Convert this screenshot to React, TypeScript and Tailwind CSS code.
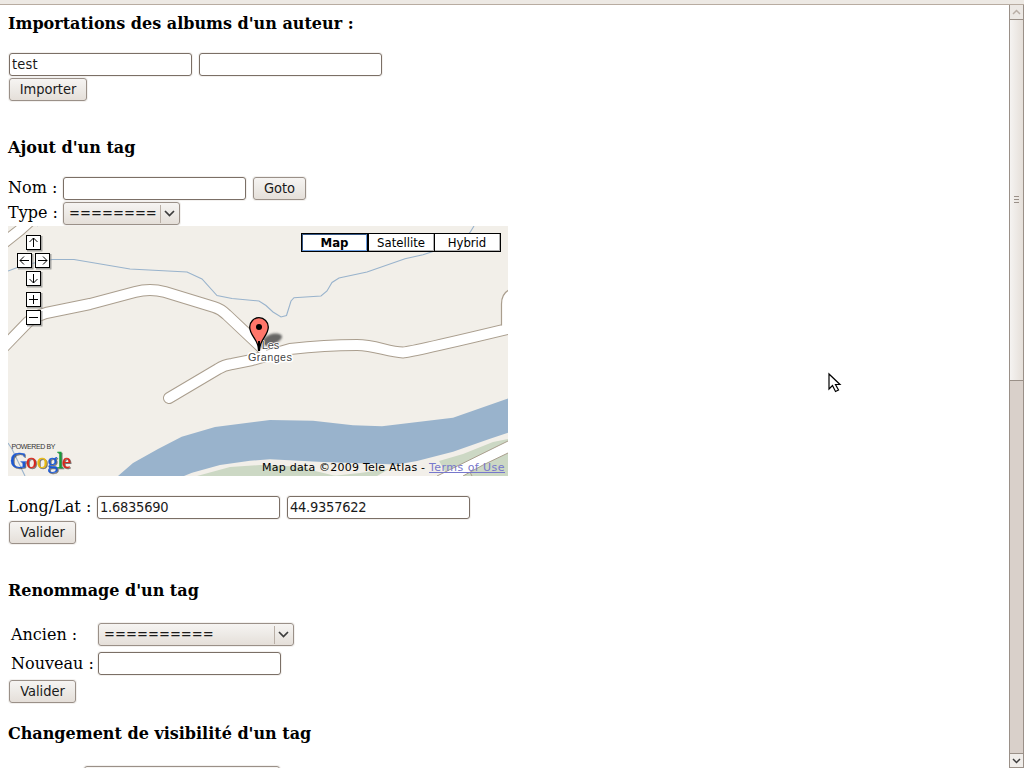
import type { ReactNode } from 'react';

const shadow = 'shadow-[0_0_0_1px_#f3f1ef]';

function Field({ value = '', numeric = false }: { value?: string; numeric?: boolean }) {
  return (
    <input
      defaultValue={value}
      className={`block h-[23px] w-[183px] shrink-0 rounded-[3px] border border-[#7b6f66] bg-white px-[2px] pb-[1px] font-['DejaVu_Sans_Condensed','DejaVu_Sans',sans-serif] text-[14.5px] text-[#1a1a1a] outline-none ${numeric ? 'tracking-[-0.25px]' : 'tracking-[0.15px]'} ${shadow}`}
    />
  );
}

function Button({ children, width }: { children: ReactNode; width: string }) {
  return (
    <button
      className={`flex h-[23px] shrink-0 items-center justify-center rounded-[3px] border border-[#9a9088] bg-linear-to-b from-[#f6f4f2] via-[#edeae6] to-[#e5dfd9] pb-[1px] font-['DejaVu_Sans_Condensed','DejaVu_Sans',sans-serif] text-[14.5px] text-[#1a1a1a] ${shadow} ${width}`}
    >
      {children}
    </button>
  );
}

function Select({ children, width }: { children?: ReactNode; width: string }) {
  return (
    <div
      className={`flex h-[23px] shrink-0 items-center rounded-[3px] border border-[#9a9088] bg-linear-to-b from-[#f6f4f2] via-[#edeae6] to-[#e5dfd9] pl-[5px] font-['DejaVu_Sans_Condensed','DejaVu_Sans',sans-serif] text-[14.5px] text-[#1a1a1a] ${shadow} ${width}`}
    >
      <span className="flex-1 pb-[1px] tracking-[0.05px] whitespace-nowrap">{children}</span>
      <span className="h-[18px] w-px bg-[#b9afa6]" />
      <svg width="18" height="21" viewBox="0 0 18 21" fill="none" stroke="#3c3c3c" strokeWidth="1.700">
        <path d="M4 8L8.500 12.500L13 8" />
      </svg>
    </div>
  );
}

function Heading({ children, className }: { children: ReactNode; className: string }) {
  return <h3 className={`h-[22px] shrink-0 pt-px text-[16px] leading-[22px] font-bold whitespace-nowrap ${className}`}>{children}</h3>;
}

const controls = [
  { x: 26, y: 235, d: 'M7.500 12V3M3.500 7L7.500 3L11.500 7' },
  { x: 17, y: 253, d: 'M12 7.500H3M7 3.500L3 7.500L7 11.500' },
  { x: 35, y: 253, d: 'M3 7.500H12M8 3.500L12 7.500L8 11.500' },
  { x: 26, y: 271, d: 'M7.500 3V12M3.500 8L7.500 12L11.500 8' },
  { x: 26, y: 292, d: 'M7.500 3V12M3 7.500H12' },
  { x: 26, y: 310, d: 'M3 7.500H12' },
];

const roads = [
  'M0 351L28 322Q36 316 46 313L90 304L135 292Q150 288 165 292L214 307Q221 309 227 315L262 348',
  'M169 398L218 369Q224 365 232 364L252 360L290 349Q325 345 357 345C375 345 388 352 403 352.500Q412 352 520 326',
  'M-4 249L20 230L40 212',
];

const logo: [string, string, number, number][] = [
  ['G', '#1b58d3', 10, 24],
  ['o', '#d8261c', 26, 21.5],
  ['o', '#e8b910', 36.8, 21.5],
  ['g', '#1b58d3', 47.3, 21.5],
  ['l', '#159c3a', 57, 24],
  ['e', '#d8261c', 62, 20],
];

function MapDrawing() {
  return (
    <svg className="block" width="500" height="250" viewBox="8 226 500 250">
      <defs>
        <filter id="soft" x="-20%" y="-50%" width="140%" height="200%">
          <feGaussianBlur stdDeviation="0.8" />
        </filter>
      </defs>
      <rect x="8" y="226" width="500" height="250" fill="#f2efe9" />
      <g fill="#ccd8c4">
        <path d="M197 476L230 467L260 465L303 466.700L315 471L336 476Z" />
        <path d="M332 476L360 473L389 469L377 476Z" />
        <path d="M439 461L463 454L493 442L508 439V476H448Z" />
      </g>
      <path
        d="M118 476L133 463L158 449L181.700 436.700L215 427L262 421L270 420L313 420.700L353 425.300L382 426.300L453 417.700L508 398.500V432.700L490 438.700L453 451.700L417 461L397 464.500L323 462L270 459.300L250 460.700L220 465L192 472.700L184 476Z"
        fill="#99b3cc"
      />
      <path d="M508 441L437 476H463L483 465L508 453Z" fill="#fff" />
      <path d="M508 441L437 476M508 453L483 465L463 476M470 472L472 476" fill="none" stroke="#a99e8d" />
      <g fill="none" stroke="#99b3cc" strokeWidth="1.100">
        <path d="M8 271L24 265L52 259.500H74L130 269L187 272L202 279L217 295.500L232 298.500L259 301L266 305.500L273 312L281 317L286.500 315.500L291 301L294 297.700L321 296L327 291L332 282.500L339 278L367 272L405 258.700L423 254.700L433 251.500L460 243L470 232.500L474 226" />
        <path d="M8 443L12 449L25 476M37 226L48 218" />
      </g>
      <g fill="none" strokeLinecap="round" strokeLinejoin="round">
        {roads.map((d) => <path key={d} d={d} stroke="#aa9e8e" strokeWidth="12" />)}
        {roads.map((d) => <path key={d} d={d} stroke="#fff" strokeWidth="10" />)}
      </g>
      <path d="M510 290Q501.500 294 501.500 304V329H510Z" fill="#fff" />
      <path d="M510 289.500Q501.500 293 501.500 304V325.500" fill="none" stroke="#aa9e8e" strokeWidth="1.200" />
      <path d="M260 348C262 343 262 338 269 335C275 332.500 282 333.500 282 337C281 342 272 345 267 345Q263 346 260 349Z" fill="#444" opacity="0.8" filter="url(#soft)" />
      <g fontFamily="'Liberation Sans', Arial, sans-serif" fontSize="11" fill="#444" stroke="#fff" strokeWidth="3" strokeLinejoin="round" paintOrder="stroke" textAnchor="middle">
        <text x="270.500" y="349" strokeWidth="1.500">Les</text>
        <text x="270" y="361" textLength="44">Granges</text>
      </g>
      <path d="M258.500 350C258.500 339 249.700 336 249.700 327A9.300 9.300 0 0 1 268.300 327C268.300 336 259.500 339 259.500 350Z" fill="#ff766a" stroke="#000" strokeWidth="1.300" />
      <path d="M259 341V351" stroke="#000" strokeWidth="2" />
      <circle cx="259" cy="327" r="3" />
      {controls.map((c) => (
        <g key={`${c.x}-${c.y}`} transform={`translate(${c.x} ${c.y})`}>
          <rect x="1" y="1" width="15.500" height="15.500" fill="#777" opacity="0.6" />
          <rect x="0.500" y="0.500" width="14" height="14" fill="#fff" stroke="#000" />
          <path d={c.d} fill="none" stroke="#000" />
        </g>
      ))}
      <text x="11.500" y="449" fontFamily="'Liberation Sans', sans-serif" fontSize="7" fill="#333" textLength="44">POWERED BY</text>
      <g fontFamily="'Liberation Serif', serif" strokeWidth="0.3">
        <text y="468" className="[filter:drop-shadow(1px_1px_0.5px_rgba(0,0,0,0.5))]">
          {logo.map(([ch, color, x, size]) => (
            <tspan key={x} x={x} fontSize={size} fill={color} stroke={color}>{ch}</tspan>
          ))}
        </text>
      </g>
    </svg>
  );
}

function MapView() {
  return (
    <div className="relative h-[250px] w-[500px] shrink-0 overflow-hidden font-['DejaVu_Sans_Condensed','DejaVu_Sans',sans-serif]">
      <MapDrawing />
      <div className="absolute top-[7px] right-[7px] flex h-[19px] w-[200px] border border-black bg-black text-[13px] leading-[17px] text-black">
        <div className="w-[65px] border border-[#345684] border-r-[#6c9ddf] border-b-[#6c9ddf] bg-white text-center leading-[16px] font-bold">Map</div>
        <div className="ml-[2px] w-[65px] border-r border-b border-[#b0b0b0] bg-white text-center">Satellite</div>
        <div className="ml-px w-[64px] flex-1 border-r border-b border-[#b0b0b0] bg-white text-center">Hybrid</div>
      </div>
      <div className="absolute right-[3px] bottom-[1px] font-['DejaVu_Sans',sans-serif] text-[11px] leading-[15px] tracking-[0.23px] whitespace-nowrap text-black">
        Map data ©2009 Tele Atlas - <a className="tracking-[0.45px] text-[#7777cc] underline">Terms of Use</a>
      </div>
    </div>
  );
}

function Scrollbar() {
  return (
    <div className="flex w-[15px] shrink-0 flex-col border-x border-[#9a9088] bg-[#d9d0ca]">
      <div className="flex h-[15px] shrink-0 items-center justify-center border-b border-[#9a9088] bg-[#ece8e4]">
        <svg width="9" height="6" fill="none" stroke="#b9aea6" strokeWidth="1.500"><path d="M1 5L4.500 1.500L8 5" /></svg>
      </div>
      <div className="flex h-[361px] shrink-0 flex-col items-center justify-center gap-[2px] border-b border-[#9a9088] bg-linear-to-r from-[#f5f3f1] to-[#e5dfd9] pb-[2px]">
        <span className="h-px w-[5px] bg-[#9a9088]" />
        <span className="h-px w-[5px] bg-[#9a9088]" />
        <span className="h-px w-[5px] bg-[#9a9088]" />
      </div>
      <div className="flex-1" />
      <div className="flex h-[15px] shrink-0 items-center justify-center border-y border-[#9a9088] bg-[#f0edea]">
        <svg width="9" height="6" fill="none" stroke="#3c3c3c" strokeWidth="1.500"><path d="M1 1L4.500 4.500L8 1" /></svg>
      </div>
    </div>
  );
}

export default function App() {
  return (
    <div className="relative flex h-[768px] w-[1024px] flex-col overflow-hidden bg-white font-['DejaVu_Serif',serif] text-[16px] leading-[22px] text-black">
      <div className="h-[5px] shrink-0 border-b border-[#b8aca1] bg-[#ede9e4]" />
      <div className="flex min-h-0 flex-1">
        <main className="flex min-w-0 flex-1 flex-col overflow-hidden pt-[7px] pl-[8px]">
          <Heading className="">Importations des albums d'un auteur :</Heading>
          <div className="mt-[19px] ml-px flex gap-[7px]">
            <Field value="test" />
            <Field />
          </div>
          <div className="mt-[2px] ml-px flex"><Button width="w-[78px]">Importer</Button></div>

          <Heading className="mt-[35px]">Ajout d'un tag</Heading>
          <div className="mt-[19px] flex">
            <label className="w-[55px] shrink-0 whitespace-nowrap">Nom :</label>
            <Field />
            <div className="ml-[7px]"><Button width="w-[53px]">Goto</Button></div>
          </div>
          <div className="mt-[2px] flex">
            <label className="w-[55px] shrink-0 whitespace-nowrap">Type :</label>
            <Select width="w-[117px]">========</Select>
          </div>
          <div className="mt-px flex shrink-0"><MapView /></div>
          <div className="mt-[20px] flex">
            <label className="w-[89px] shrink-0 whitespace-nowrap">Long/Lat :</label>
            <Field value="1.6835690" numeric />
            <div className="ml-[7px]"><Field value="44.9357622" numeric /></div>
          </div>
          <div className="mt-[2px] ml-px flex"><Button width="w-[67px]">Valider</Button></div>

          <Heading className="mt-[35px]">Renommage d'un tag</Heading>
          <div className="mt-[22px] ml-[3px] flex">
            <label className="h-[23px] w-[87px] shrink-0 pt-px whitespace-nowrap">Ancien :</label>
            <Select width="w-[196px]">==========</Select>
          </div>
          <div className="mt-[6px] ml-[3px] flex">
            <label className="h-[23px] w-[87px] shrink-0 pt-px whitespace-nowrap">Nouveau :</label>
            <Field />
          </div>
          <div className="mt-[5px] ml-px flex"><Button width="w-[67px]">Valider</Button></div>

          <Heading className="mt-[19px]">Changement de visibilité d'un tag</Heading>
          <div className="mt-[22px] ml-[76px] flex"><Select width="w-[196px]" /></div>
        </main>
        <Scrollbar />
      </div>
      <svg className="absolute top-[372px] left-[827px]" width="15" height="22" viewBox="0 0 15 22">
        <path d="M2 2V17L5.500 13.500L8.500 19.500L11.500 18L8.500 12.500H13Z" fill="#fff" stroke="#000" strokeWidth="1.200" />
      </svg>
    </div>
  );
}
